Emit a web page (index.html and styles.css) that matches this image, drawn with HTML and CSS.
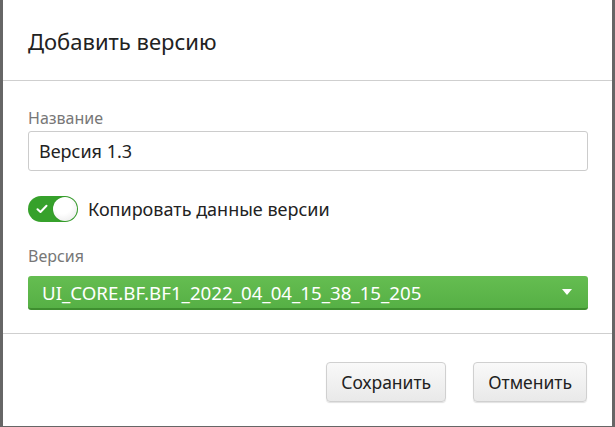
FILE: index.html
```html
<!DOCTYPE html>
<html lang="ru">
<head>
<meta charset="utf-8">
<link rel="stylesheet" href="styles.css">
</head>
<body>
<div class="dialog">
  <div class="header"><h1 class="title">Добавить версию</h1></div>
  <div class="content">
    <label class="label">Название</label>
    <div class="input">Версия 1.3</div>
    <div class="toggle-row">
      <span class="toggle">
        <svg class="check" width="12" height="10" viewBox="0 0 12 10"><path d="M1.5 5.2 L4.5 8 L10.5 1.8" fill="none" stroke="#fff" stroke-width="2" stroke-linecap="round" stroke-linejoin="round"/></svg>
        <span class="knob"></span>
      </span>
      <span class="toggle-text">Копировать данные версии</span>
    </div>
    <label class="label label-second">Версия</label>
    <div class="select">
      <span class="select-text">UI_CORE.BF.BF1_2022_04_04_15_38_15_205</span>
      <span class="caret"></span>
    </div>
  </div>
  <div class="footer">
    <button class="btn">Сохранить</button>
    <button class="btn">Отменить</button>
  </div>
</div>
</body>
</html>
```

FILE: styles.css
```css
html, body {
  margin: 0;
  padding: 0;
}
body {
  background: #666666;
  width: 615px;
  height: 427px;
  overflow: hidden;
  font-family: "Noto Sans", "Open Sans", sans-serif;
  color: #222;
}
.dialog {
  margin: 0 3px;
  width: 609px;
  height: 426px;
  background: #fff;
  display: flex;
  flex-direction: column;
}
.header {
  height: 80px;
  border-bottom: 1px solid #cfcfcf;
  display: flex;
  align-items: center;
  padding: 0 25px;
  flex: none;
}
.title {
  margin: 0;
  font-size: 22px;
  font-weight: normal;
  color: #222;
  position: relative;
  top: 1px;
}
.content {
  height: 252px;
  flex: none;
  padding: 27px 24px 0 25px;
  box-sizing: border-box;
  display: flex;
  flex-direction: column;
}
.label {
  display: block;
  font-size: 16px;
  line-height: 20px;
  height: 20px;
  color: #777;
  margin-bottom: 3px;
}
.label-second {
  margin-top: 24px;
  margin-bottom: 10px;
}
.input {
  height: 40px;
  box-sizing: border-box;
  border: 1px solid #cccccc;
  border-radius: 3px;
  padding: 0 10px;
  font-size: 18px;
  line-height: 38px;
  color: #222;
}
.toggle-row {
  margin-top: 25px;
  height: 26px;
  display: flex;
  align-items: center;
  gap: 10px;
}
.toggle {
  position: relative;
  width: 50px;
  height: 26px;
  border-radius: 13px;
  background: #36a12b;
  flex: none;
}
.check {
  position: absolute;
  left: 8px;
  top: 8px;
}
.knob {
  position: absolute;
  right: 1px;
  top: 1px;
  width: 24px;
  height: 24px;
  border-radius: 50%;
  background: radial-gradient(circle at 40% 35%, #ffffff 40%, #e6e6e6 100%);
  box-shadow: 0 0 1px rgba(0,0,0,0.3);
}
.toggle-text {
  font-size: 18px;
  color: #222;
}
.select {
  height: 34px;
  box-sizing: border-box;
  border-radius: 3px;
  background: linear-gradient(#65bd51, #56b045);
  border-bottom: 2px solid #3e8e2f;
  display: flex;
  align-items: center;
  padding: 0 16px 0 14px;
}
.select-text {
  flex: 1;
  color: #fff;
  font-size: 18.7px;
}
.caret {
  width: 0;
  height: 0;
  border-left: 5px solid transparent;
  border-right: 5px solid transparent;
  border-top: 6px solid #fff;
}
.footer {
  flex: 1;
  border-top: 1px solid #cfcfcf;
  display: flex;
  justify-content: flex-end;
  align-items: flex-start;
  gap: 27px;
  padding: 28px 25px 0 0;
}
.btn {
  height: 40px;
  padding: 0 14px;
  font-family: "Noto Sans", "Open Sans", sans-serif;
  font-size: 17.5px;
  color: #222;
  background: linear-gradient(#f9f9f9, #e9e9e9);
  border: 1px solid #d0d0d0;
  border-radius: 4px;
  box-shadow: 0 1px 1px rgba(0,0,0,0.12);
}
```
